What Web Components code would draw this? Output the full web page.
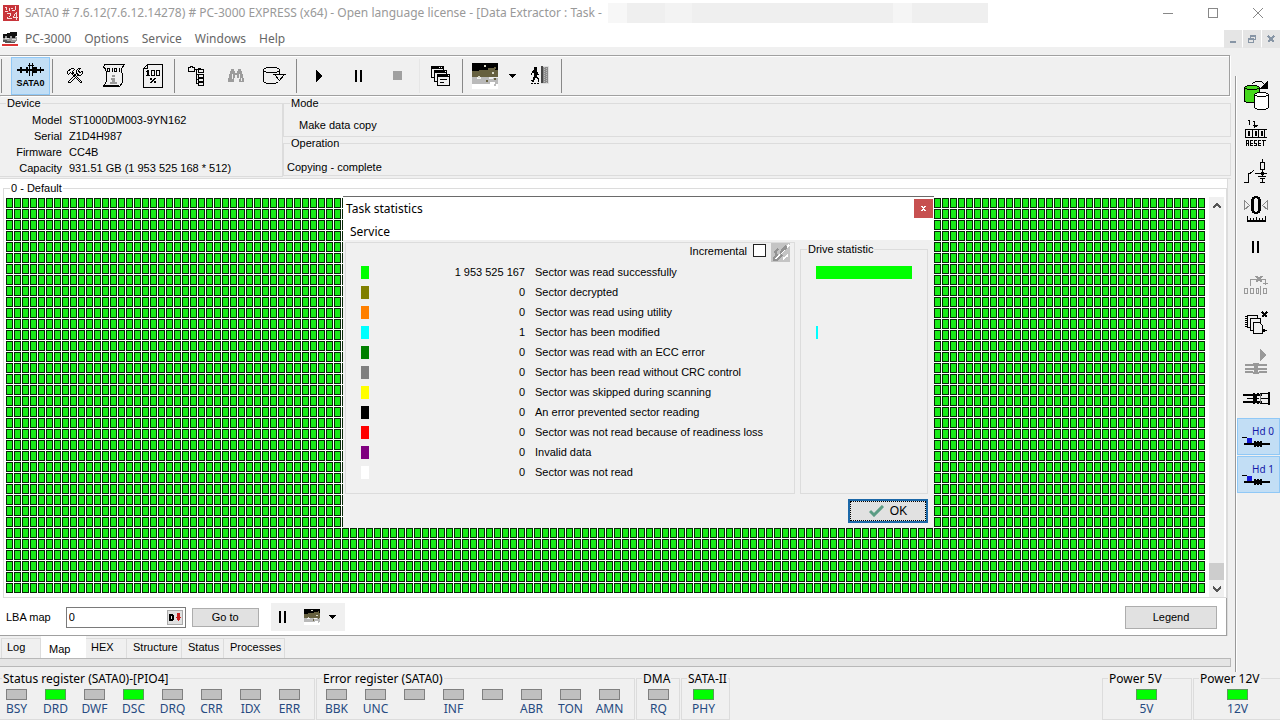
<!DOCTYPE html>
<html lang="en">
<head>
<meta charset="utf-8">
<title>PC-3000 EXPRESS - Data Extractor</title>
<style>
html, body { margin: 0; height: 100%; }
body { background: #f0f0f0; color: #000; font: 11px/14px "Liberation Sans", Arial, sans-serif; overflow: hidden; }
</style>
</head>
<body>
<app-window></app-window>
<script>
const UI = '12px/16px "Noto Sans", "Open Sans", sans-serif';

const define = (name, html, setup) => {
  const tpl = document.createElement('template');
  tpl.innerHTML = '<style>*{box-sizing:border-box}button{font:inherit;color:inherit;margin:0;padding:0}svg{display:block;flex:none}</style>' + html;
  customElements.define(name, class extends HTMLElement {
    constructor() {
      super();
      this.attachShadow({ mode: 'open' }).append(tpl.content.cloneNode(true));
    }
    connectedCallback() { if (setup) setup(this, this.shadowRoot); }
  });
};

/* Each icon: [width, height, markup]; strokes are one pixel wide on half-pixel centres. */
const K = 'fill="none" stroke="#000"';
const noise = `<path fill="#000" d="M0 0h26v8H0z"/><path fill="#66603f" d="M0 8h7V7h9V5h7v2h3v7H0z"/><path fill="#b9b9b9" d="M0 14h5v2h4v-2h8v2h4v-1h5v6H0z"/><path fill="#fff" d="M0 21h18v-2h5v2h3v5H0z"/><path fill="#d8d8c8" d="M12 2h2v2h-2zM20 9h2v2h-2zM6 13h2v2H6z"/><path fill="#66603f" d="M22 15h2v2h-2zM14 17h2v2h-2zM22 4h2v2h-2z"/><path fill="#bbb" d="M22 21h2v2h-2z"/>`;
const hd = `<path fill="#1418d8" d="M5 2h5v5H5z"/><path stroke="#000" stroke-width="1" d="M0 1.500h5"/><path fill="#000" d="M2 7h10V5h2v1h1V5h2v1h1V5h2v2h9v2h-9v2h-2v-1h-1v1h-2v-1h-1v1h-2V9H2z"/>`;
const ICONS = {
  logo: [16, 16, `<path fill="#c8343a" d="M0 0h16v16H0z"/><path fill="none" stroke="#f6dede" d="M2 2.500h2M3.500 2v3M6.500 3v3M8 3.500h2M12.500 1v4M9 5.500h3M2 6.500h3M4 8.500h4M7.500 8v3M6 11.500h1M4 13.500h5M4.500 12v2M13.500 7v8M9.500 12.500h5M12.500 8v1M11.500 9v2M10.500 11v1"/>`],
  drive: [16, 16, `<path fill="#999" d="M1 3h6l7-1 1 8-3 2H3L1 9z"/><path fill="#111" d="M1 3h4V2h3V1h7v4h-2v2h-3V5H8v2H5V5H3v2H1z"/><path fill="#555" d="M1 9h4v1h4v1h4v1H3v-1H1z"/><path fill="#ddd" d="M3 7h4v1H3zM10 8h4v1h-4z"/><path fill="#d33" d="M0 13h16v2H0z"/>`],
  sata: [27, 14, `<path fill="#000" d="M0 6h3V4h2v2h4V4h2v2h5V4h4v2h3V4h1v2h3v2h-3v2h-1V8h-3v2h-4V8h-5v2H9V8H5v2H3V8H0z"/><path ${K} d="M12.500 0v13M15.500 0v13M11 2.500h6"/>`],
  tools: [16, 16, `<path ${K} d="M0.500 5.500v-2l4-3h2l1 1-2 2 1 2h-2l-1-1-2 2zM6.500 5.500l8 8v1h-1l-8-8M1.500 14.500v-1l8-8 2 1-8 8zM9.500 5.500v-3l2-2h2l-2 2 1 2 3-1v2l-2 2h-3"/>`],
  script: [22, 23, `<path ${K} d="M1 0.500h20.500l-3 4 1 8v6l-3 4H0.500l3-5V9l-1-4-2-2 1-2.500M0 21.500h16"/><path ${K} d="M4.500 4.500h2v3h-2zM9.500 4v4M11.500 4.500h2v3h-2zM16.500 4v4"/><path fill="#999" d="M9 11h3v2H9zM8 14h4v4h2v2H7v-2h2v-2H8z"/>`],
  pct: [20, 24, `<path ${K} d="M4.500 0.500h15v23H0.500v-19zM4.500 0.500v4H0.500"/><path fill="#000" fill-rule="evenodd" d="M4 6h2v5h1v1H3v-1h1V8H3V7h1zM8 6h4v6H8zm1 1v4h2V7zM13 6h4v6h-4zm1 1v4h2V7zM7 14h2v2H7zM11 14h2v1h-1v1h-1v1h-1v1H9v1H7v-1h1v-1h1v-1h1v-1h1zM11 17h2v2h-2z"/>`],
  tree: [17, 20, `<path ${K} d="M0.500 1.500h2v-1h2v1h2v4H0.500zM7 3.500h3M8.500 4v13M8 8.500h2M8 13.500h2M8 17.500h2M10.500 3.500h5v3h-5zM10.500 8.500h5v3h-5zM10.500 12.500h5v3h-5zM10.500 16.500h5v3h-5zM10 2.500h3"/>`],
  binoc: [16, 14, `<path fill="#9c9c9c" d="M3 0h3v2h1v2h2V2h1V0h3v2h1v3h1v4h1v4h-5V9H9V6H7v3H6v4H0V9h1V5h1V2h1z"/><path fill="#eee" d="M4 5h1v5H4zM7 7h1v5H7zM11 5h1v5h-1zM13 9h1v3h-1z"/>`],
  disk: [23, 18, `<path ${K} d="M3 0.500h11M1 1.500h2M14 1.500h2M0.500 2v13M16.500 2v5M1 4.500h2M14 4.500h2M3 5.500h11M1 15.500h2M3 16.500h10M13 15.500h2M11.500 7.500h10l-5 6z"/><path ${K} d="M10 7.500h13"/>`],
  play: [7, 12, `<path fill="#000" d="M0 0h1v1h1v1h1v1h1v1h1v1h1v2H5v1H4v1H3v1H2v1H1v1H0z"/>`],
  pause: [8, 12, `<path fill="#000" d="M0 0h2v12H0zM5 0h2v12H5z"/>`],
  stop: [9, 9, `<path fill="#a0a0a0" d="M0 0h9v9H0z"/>`],
  windows: [19, 20, `<path fill="#000" d="M0 0h13v4h3v4h3v12H6v-4H3v-4H0z"/><path fill="#f0f0f0" d="M1 3h11v1H3v7H1zM4 7h11v1H6v7H4zM7 11h11v8H7z"/><path fill="#000" d="M9 13h7v1H9zM9 16h4v1H9z"/><path fill="#f0f0f0" d="M8 1h1v1H8zM10 1h1v1h-1zM14 5h1v1h-1zM17 9h1v1h-1z"/>`],
  noise: [26, 26, noise],
  noiseSmall: [16, 16, `<svg width="16" height="16" viewBox="0 0 26 26">${noise}</svg>`],
  down: [7, 4, `<path fill="#000" d="M0 0h7v1H6v1H5v1H4v1H3V3H2V2H1V1H0z"/>`],
  exit: [19, 19, `<path fill="#000" d="M4 1h3v3H4zM3 4h4v2h1v2h1v1H7v2h1v1h1v4H8v-3H7v-1H5v2H4v2H2v-1H1v-1h2v-3h1V7H2v2H1V7h1V5h1z"/><path stroke="#000" stroke-dasharray="2 1" d="M1 17.500h9"/><path fill="#ddd" d="M11 0h8v18h-8z"/><path fill="#444" d="M11 0h2v17h-2z"/><path fill="#8a8a8a" d="M13 1h5v16h-5z"/><path fill="none" stroke="#bbb" stroke-dasharray="1 1" d="M14.500 1v16M16.500 2v15"/>`],
  copyDisk: [26, 31, `<path fill="#45d81c" stroke="#000" d="M1.500 7.500l3-2h9l3 2v14l-3 1h-9l-3-1z"/><path ${K} d="M1.500 7.500l3 2h9l3-2"/><path fill="#fff" stroke="#000" d="M11.500 14.500l3-2h8l3 2v13l-3 2h-8l-3-2z"/><path ${K} d="M11.500 14.500l3 2h8l3-2M9.500 3.500l3-2h6l3 3"/><path fill="#000" d="M25 0v9h-8z"/>`],
  reset: [22, 28, `<path ${K} d="M3 1.500h1.500V6M9.500 2.500v6M8 2.500h2M7.500 6.500h5M8.500 7.500h3M0.500 10.500h21M0.500 18.500h21M0.500 10v9M7.500 11v8M13.500 11v8M19.500 11v8M3.500 12.500h1v4h-1zM10.500 12.500h1v4h-1zM16.500 12.500h1v4h-1z"/><path ${K} d="M1.500 27v-5.500h2v3h-2M3.500 25v2M8 21.500h-2.500v5h2.500M5 24.500h3M12 21.500h-2.500v3h2v2h-2.500M16 21.500h-2.500v5h2.500M13 24.500h3M17 21.500h4M18.500 21v6"/>`],
  circuit: [25, 25, `<path ${K} d="M0 23.500h4.500v-9H6l4-3M11 14.500h12M18.500 0v4M16.500 3.500h4v7h-4zM18.500 10v7M14 17.500h8M16 19.500h5M18.500 20v4M16 23.500h5"/><path fill="#000" d="M17 13h3v3h-3z"/>`],
  zero: [24, 27, `<path fill="none" stroke="#888" d="M0.500 4.500v9l5-4zM23.500 4.500v9l-5-4z"/><path fill="#000" fill-rule="evenodd" d="M10 0h4v1h2v2h1v12h-1v2h-2v1h-4v-1H8v-2H7V3h1V1h2zm0 3v12h1v1h2v-1h1V3h-1V2h-2v1z"/><path fill="#000" d="M3 20h1v4h2v-2h1v2h2v-2h1v2h2v-3h1v3h2v-2h1v2h2v-2h1v2h2v-4h1v6H3z"/>`],
  cutoff: [24, 19, `<path fill="none" stroke="#999" d="M6.500 10V3.500h15V9M19 7.500h5M0.500 12.500h3v5h-3zM6.500 12.500h3v5h-3zM12.500 12.500h2v5h-2zM16.500 10v9M19.500 12.500h3v5h-3z"/><path stroke="#999" stroke-width="2" d="M12 0l6 6M18 0l-6 6"/>`],
  pages: [23, 24, `<g fill="#f0f0f0" stroke="#000"><path d="M2.500 4.500h10v12h-10z"/><path d="M5.500 7.500h10v12h-10z"/><path d="M8.500 11.500h6l3 3v8h-9z"/></g><path ${K} d="M0 5.500h3M0 7.500h3M0 9.500h3M0 11.500h3M0 13.500h3M0 15.500h3"/><path ${K} stroke-width="2" d="M17 1l5 5M22 1l-5 5"/><path fill="#000" d="M17 18h3v1h2v1h-2v1h-3z"/>`],
  connectOff: [22, 25, `<path fill="#999" d="M15 0l6 6-6 6zM0 15h8v-1h6v1h8v2H0zM0 19h22v2H0zM0 22h8v1h6v-1h8v2h-8v1H8v-1H0zM9 16h4v8H9z"/>`],
  connect: [27, 14, `<path fill="#000" d="M0 2h10V1h2v1h2V1h2v1h3v2H0zM0 9h19v2h-3v1h-2v-1h-2v1h-2v-1H0zM10 3h4v7h-4zM4 6h12v1H4zM25 0h2v13h-2z"/><path ${K} d="M17 1.500h9M17 6.500h9M17 11.500h9"/><path fill="#777" d="M17 2h1v9h-1z"/>`],
  hd: [28, 12, hd],
  check: [15, 12, `<path fill="none" stroke="#5b9c84" stroke-width="3" shape-rendering="auto" d="M1 6l4 4 9-9"/>`],
  brush: [19, 19, `<path fill="#c4c4c4" d="M0 0h19v19H0z"/><path stroke="#fff" stroke-width="2" d="M18 2L9 11M4 17l5-5M12 16l5-4"/><path fill="none" stroke="#929292" stroke-width="2" d="M15 3l-5 5M7 6L4 9l2 3-3 3v2h3l5-5M9 10l7-6"/>`],
  up: [8, 6, `<path fill="none" stroke="#555" stroke-width="2" d="M0 5l4-4 4 4"/>`],
  dn: [8, 6, `<path fill="none" stroke="#555" stroke-width="2" d="M0 1l4 4 4-4"/>`],
  min: [10, 10, `<path stroke="#888" d="M0 5.500h10"/>`],
  max: [10, 10, `<path fill="none" stroke="#888" d="M0.500 0.500h9v9h-9z"/>`],
  close: [10, 10, `<path fill="none" stroke="#888" shape-rendering="auto" d="M0 0l10 10M10 0L0 10"/>`],
  cmin: [8, 8, `<path fill="#8795a5" d="M1 6h6v2H1z"/>`],
  crest: [8, 8, `<path fill="none" stroke="#8795a5" d="M2.500 3V0.500h5v4H6M0.500 3.500h5v4h-5zM2 1.500h6M0 4.500h6"/>`],
  cclose: [8, 8, `<path fill="none" stroke="#8795a5" stroke-width="2" d="M1 1l6 6M7 1L1 7"/>`],
  xw: [5, 5, `<path fill="#fff" d="M0 0h2v1h1V0h2v1H4v1H3v1h1v1h1v1H3V4H2v1H0V4h1V3h1V2H1V1H0z"/>`],
  dmark: [12, 9, `<path fill="#000" fill-rule="evenodd" d="M0 1h4v1h1v5H4v1H0zM2 3v3h1V3z"/><path fill="#c22" d="M8 0h3v4h1v1h-1v2H10v1H9V7H8V5H7V4h1z"/>`]
};
define('px-icon', '', (el, root) => {
  const [w, h, body] = ICONS[el.getAttribute('name')];
  root.innerHTML = `<style>:host{display:inline-block;flex:none}svg{display:block}</style><svg width="${w}" height="${h}" viewBox="0 0 ${w} ${h}" shape-rendering="crispEdges" aria-hidden="true">${body}</svg>`;
});

define('group-box', `<style>
:host{display:flex;min-width:0}
fieldset{flex:1;min-width:0;margin:0;padding:0;border:1px solid #dcdcdc}
legend{padding:0 1px;margin-left:var(--legend-x,6px);line-height:13px;white-space:nowrap}
</style><fieldset><legend></legend><slot></slot></fieldset>`, (el, root) => {
  root.querySelector('legend').textContent = el.getAttribute('label');
});

define('title-bar', `<style>
:host{display:flex;align-items:center;height:26px;background:#fff;color:#999;font:${UI}}
px-icon.logo{margin:0 6px 0 3px}
.hidden{width:380px;height:20px;margin-left:6px;background:linear-gradient(90deg,#f7f7f7 5%,#efefef 5% 15%,#f3f3f3 15% 22%,#efefef 22% 75%,#f5f5f5 75% 80%,#efefef 80%)}
.box{display:flex;margin-left:auto}
.box button{width:45px;height:26px;border:0;background:none;display:flex;align-items:center;justify-content:center}
span{white-space:nowrap}
</style><px-icon class="logo" name="logo"></px-icon>
<span>SATA0 # 7.6.12(7.6.12.14278) # PC-3000 EXPRESS (x64) - Open language license - [Data Extractor : Task -</span>
<div class="hidden"></div>
<div class="box"><button aria-label="Minimize"><px-icon name="min"></px-icon></button><button aria-label="Maximize"><px-icon name="max"></px-icon></button><button aria-label="Close"><px-icon name="close"></px-icon></button></div>`);

define('menu-bar', `<style>
:host{display:flex;height:21px;background:#fff;color:#666;font:${UI}}
nav{display:flex;align-items:center;gap:13px;padding-left:2px;height:25px}
nav px-icon{margin-right:-6px}
button.m{border:0;background:none}
.mdi{display:flex;gap:1px;margin:4px 0 0 auto}
.mdi button{width:18px;height:18px;border:0;background:#e5e5e5;display:flex;align-items:center;justify-content:center}
</style><nav><px-icon name="drive"></px-icon><button class="m">PC-3000</button><button class="m">Options</button><button class="m">Service</button><button class="m">Windows</button><button class="m">Help</button></nav>
<div class="mdi"><button aria-label="Minimize child"><px-icon name="cmin"></px-icon></button><button aria-label="Restore child"><px-icon name="crest"></px-icon></button><button aria-label="Close child"><px-icon name="cclose"></px-icon></button></div>`);

customElements.define('tool-icon', class extends HTMLElement {
  constructor() { super(); this.attachShadow({ mode: 'open' }); }
  connectedCallback() {
    const n = this.getAttribute('name'), label = this.getAttribute('label') || n;
    this.shadowRoot.innerHTML = `<style>
:host{display:flex;width:39px;height:38px;flex:none}
:host([arrow]){width:16px}
:host([side]){width:auto}
button{flex:1;box-sizing:border-box;display:flex;flex-direction:column;align-items:center;justify-content:center;gap:2px;padding:0;border:0;background:none;color:inherit;font:bold 9px/9px "Liberation Sans",sans-serif}
:host([side]) button{padding-right:5px}
:host([active]) button{background:#c2def5;border:1px solid #90c8f6}
:host([side][active]) button{margin-bottom:1px;color:#1418a8;font:10px/10px "Noto Sans",sans-serif;flex-direction:column-reverse;gap:0}
:host([side]) ::slotted(*){margin-left:14px}
</style><button aria-label="${label}"><px-icon name="${n}"></px-icon><slot></slot></button>`;
  }
});

define('tool-bar', `<style>
:host{display:flex;align-items:center;height:41px;margin:0 5px 1px 0;border:solid #a0a0a0;border-width:1px 1px 1px 0;box-shadow:inset 0 1px #fff,1px 1px #fff}
i{width:1px;height:34px;margin:0 2px;background:#888}
i:first-of-type{margin:0 9px 0 1px}
i.wide{margin-right:3px}
i.soft{margin:0 1px 0 2px;background:#e6e6e6}
</style><i></i><tool-icon name="sata" label="SATA0" active><span>SATA0</span></tool-icon><i></i>
<tool-icon name="tools" label="Settings"></tool-icon><tool-icon name="script" label="Script"></tool-icon><tool-icon name="pct" label="Progress"></tool-icon><i></i>
<tool-icon name="tree" label="Tree"></tool-icon><tool-icon name="binoc" label="Find"></tool-icon><tool-icon name="disk" label="Disk"></tool-icon><i class="wide"></i>
<tool-icon name="play" label="Start"></tool-icon><tool-icon name="pause" label="Pause"></tool-icon><tool-icon name="stop" label="Stop"></tool-icon><i class="soft"></i>
<tool-icon name="windows" label="Windows"></tool-icon><i></i><tool-icon name="noise" label="Map view"></tool-icon><tool-icon arrow name="down" label="Map view options"></tool-icon><tool-icon name="exit" label="Exit"></tool-icon><i></i>`);

define('info-panel', `<style>
:host{display:grid;grid-template-columns:283px minmax(0,1fr);height:82px;padding-bottom:2px;margin-right:4px;border-bottom:1px solid #dcdcdc}
dl{display:grid;grid-template-columns:62px auto;column-gap:7px;line-height:16px;margin:2px 0 0}
dt{text-align:right}dd{margin:0;white-space:nowrap}
.device{margin-left:-1px}
.right{display:grid;grid-template-rows:40px 39px}
p{margin:8px 0 0 15px;line-height:14px}
.op p{margin:10px 0 0 3px}
</style><group-box class="device" label="Device"><dl><dt>Model</dt><dd>ST1000DM003-9YN162</dd><dt>Serial</dt><dd>Z1D4H987</dd><dt>Firmware</dt><dd>CC4B</dd><dt>Capacity</dt><dd>931.51 GB (1 953 525 168 * 512)</dd></dl></group-box>
<div class="right"><group-box label="Mode"><p>Make data copy</p></group-box><group-box class="op" label="Operation"><p>Copying - complete</p></group-box></div>`);

define('scroll-bar', `<style>
:host{display:flex;flex-direction:column;width:15px;background:#f0f0f0}
button{height:17px;border:0;background:none;display:flex;align-items:center;justify-content:center}
.track{flex:1;display:flex;flex-direction:column;justify-content:flex-end}
.thumb{height:17px;background:#cdcdcd}
</style><button aria-label="Scroll up"><px-icon name="up"></px-icon></button><div class="track"><div class="thumb"></div></div><button aria-label="Scroll down"><px-icon name="dn"></px-icon></button>`);

define('sector-map', `<style>
:host{display:block;min-width:0}
svg{width:100%;height:100%}
</style><svg shape-rendering="crispEdges" role="img" aria-label="Sector map"><defs><pattern id="cell" width="8" height="11" patternUnits="userSpaceOnUse"><rect width="8" height="11" fill="#fff"/><rect width="7" height="10" fill="#062806"/><rect x="1" y="1" width="5" height="8" fill="#18ec18"/></pattern></defs><rect width="100%" height="100%" fill="url(#cell)"/></svg>`);

define('map-page', `<style>
:host{display:flex;flex-direction:column;background:#fff;margin-right:8px;padding-top:3px;border-bottom:1px solid #a0a0a0;min-height:0;box-shadow:1px 0 #dcdcdc}
group-box{flex:1;margin:0 0 0 3px;min-height:0}
.area{display:flex;gap:3px;height:100%;padding:2px 2px 0}
sector-map{flex:1;margin:1px 0 3px}
.controls{display:flex;align-items:center;height:37px;padding:1px 9px 0 6px;border-right:1px solid #a0a0a0}
.field{display:flex;align-items:center;width:120px;height:21px;margin:0 6px 0 15px;padding-right:2px;border:1px solid #7a7a7a}
input{flex:1;min-width:0;border:0;padding:0 2px;font:inherit;outline:0;background:none}
.field button{width:16px;height:15px;border:1px solid #aaa;background:#e1e1e1;display:flex;align-items:center;justify-content:center}
.b{border:1px solid #adadad;background:#e1e1e1}
.go{width:67px;height:19px}
.tools{display:flex;align-items:center;gap:9px;margin-left:12px;padding:0 8px;width:74px;height:28px;background:#f0f0f0}
.tools button{border:0;background:none;display:flex}
.tools .view{margin-left:8px}
.legend{margin-left:auto;width:92px;height:23px}
</style><group-box label="0 - Default"><div class="area"><sector-map></sector-map><scroll-bar></scroll-bar></div></group-box>
<div class="controls"><label for="lba">LBA map</label><div class="field"><input id="lba" value="0"><button aria-label="Decimal"><px-icon name="dmark"></px-icon></button></div><button class="b go">Go to</button>
<div class="tools"><button aria-label="Pause"><px-icon name="pause"></px-icon></button><button class="view" aria-label="View"><px-icon name="noiseSmall"></px-icon></button><button aria-label="View options"><px-icon name="down"></px-icon></button></div><button class="b legend">Legend</button></div>`);

define('tab-strip', `<style>
:host{display:flex;height:22px;padding-left:1px}
button{height:20px;margin-top:2px;padding:0 0 3px 6px;text-align:left;border:solid #dcdcdc;border-width:1px 1px 0 0;background:none;line-height:14px}
.l{width:40px;border-left-width:1px;padding-left:5px}
.on{width:45px;height:22px;margin-top:0;padding:4px 0 0 8px;background:#fff;border:0}
.h{width:41px;padding-left:5px}.s{width:55px}.t{width:42px}.p{width:61px}
</style><button class="l">Log</button><button class="on" aria-pressed="true">Map</button><button class="h">HEX</button><button class="s">Structure</button><button class="t">Status</button><button class="p">Processes</button>`);

define('side-bar', `<style>
:host{display:block;margin-top:29px;border-left:1px solid #999;box-shadow:inset 1px 0 #fff;padding-left:1px}
</style><tool-icon side name="copyDisk" label="Copy disk"></tool-icon><tool-icon side name="reset" label="Reset"></tool-icon><tool-icon side name="circuit" label="Power"></tool-icon><tool-icon side name="zero" label="Calibrate"></tool-icon><tool-icon side name="pause" label="Pause"></tool-icon><tool-icon side name="cutoff" label="Cut off"></tool-icon><tool-icon side name="pages" label="Pages"></tool-icon><tool-icon side name="connectOff" label="Disconnect"></tool-icon><tool-icon side name="connect" label="Connect"></tool-icon><tool-icon side active name="hd" label="Hd 0"><span>Hd 0</span></tool-icon><tool-icon side active name="hd" label="Hd 1"><span>Hd 1</span></tool-icon>`);

define('status-led', `<style>
:host{display:flex;flex-direction:column;align-items:center;width:39px;color:#264a80;line-height:16px}
i{width:21px;height:11px;border:1px solid #808080;background:#c0c0c0;margin-bottom:1px}
:host([on]) i{background:#0f0;border-color:#5a9a5a}
</style><i></i><slot></slot>`);

define('status-bar', `<style>
:host{display:flex;gap:1px;height:48px;font:${UI}}
group-box{--legend-x:5px}
.row{display:flex;padding-top:4px}
.a{width:316px;margin-left:-1px;--legend-x:2px}.a .row{margin-left:-3px}
.b{width:319px}.d{width:44px}.s{width:49px}.p5{width:90px;margin-left:auto}.p12{width:88px;margin-right:-1px}
.d .row,.s .row{padding-left:2px}.p5 .row,.p12 .row{padding-left:24px}
</style>
<group-box class="a" label="Status register (SATA0)-[PIO4]"><div class="row"><status-led>BSY</status-led><status-led on>DRD</status-led><status-led>DWF</status-led><status-led on>DSC</status-led><status-led>DRQ</status-led><status-led>CRR</status-led><status-led>IDX</status-led><status-led>ERR</status-led></div></group-box>
<group-box class="b" label="Error register (SATA0)"><div class="row"><status-led>BBK</status-led><status-led>UNC</status-led><status-led></status-led><status-led>INF</status-led><status-led></status-led><status-led>ABR</status-led><status-led>TON</status-led><status-led>AMN</status-led></div></group-box>
<group-box class="d" label="DMA"><div class="row"><status-led>RQ</status-led></div></group-box>
<group-box class="s" label="SATA-II"><div class="row"><status-led on>PHY</status-led></div></group-box>
<group-box class="p5" label="Power 5V"><div class="row"><status-led on>5V</status-led></div></group-box>
<group-box class="p12" label="Power 12V"><div class="row"><status-led on>12V</status-led></div></group-box>`);

const STATS = [
  ['#00ff00', '1 953 525 167', 'Sector was read successfully', 96],
  ['#808000', '0', 'Sector decrypted', 0],
  ['#ff8000', '0', 'Sector was read using utility', 0],
  ['#00ffff', '1', 'Sector has been modified', 2],
  ['#008000', '0', 'Sector was read with an ECC error', 0],
  ['#808080', '0', 'Sector has been read without CRC control', 0],
  ['#ffff00', '0', 'Sector was skipped during scanning', 0],
  ['#000000', '0', 'An error prevented sector reading', 0],
  ['#ff0000', '0', 'Sector was not read because of readiness loss', 0],
  ['#800080', '0', 'Invalid data', 0],
  ['#ffffff', '0', 'Sector was not read', 0]
];
define('stats-dialog', `<style>
:host{display:block;position:absolute;left:calc(50% - 297px);top:calc(50% - 164px);width:591px;background:#f0f0f0;border-top:1px solid #6a6a6a}
header{display:flex;align-items:center;justify-content:space-between;height:23px;padding:0 1px 0 3px;background:#fff;font:${UI}}
header button{width:19px;height:19px;border:0;background:#c75050;display:flex;align-items:center;justify-content:center;align-self:flex-start;margin-top:2px}
nav{height:20px;padding:4px 7px 0;background:#fff;font:${UI}}
nav button{border:0;background:none;display:block}
.cols{display:grid;grid-template-columns:minmax(0,1fr) 128px;column-gap:5px;padding:2px 6px 0 2px}
.left{border:1px solid #dcdcdc;height:252px}
.inc{display:flex;align-items:flex-start;justify-content:flex-end;height:19px;padding-right:4px}
.inc label{padding-top:1px}
input{appearance:none;width:13px;height:13px;margin:1px 5px 0 6px;border:1px solid #222;background:#fff}
.inc button{border:0;background:none}
table{border-collapse:collapse;margin:0 0 0 15px}
td{height:20px;padding:0;line-height:14px;white-space:nowrap}
td:nth-child(2){width:156px;text-align:right}
td:nth-child(3){padding-left:10px}
i{display:block;width:8px;height:13px}
group-box{margin-top:1px}
.bars{padding:6px 0 0 15px}
.bars div{height:20px;display:flex;align-items:center}
footer{display:flex;justify-content:flex-end;padding:5px 6px 5px}
footer button{display:flex;align-items:center;justify-content:center;gap:6px;width:80px;height:24px;border:2px solid #1c68a8;background:#e1e1e1;outline:1px dotted #000;outline-offset:-3px;font-size:12px}
</style><header><span>Task statistics</span><button aria-label="Close"><px-icon name="xw"></px-icon></button></header><nav><button>Service</button></nav>
<div class="cols"><div class="left"><div class="inc"><label for="inc">Incremental</label><input type="checkbox" id="inc"><button aria-label="Clear"><px-icon name="brush"></px-icon></button></div><table><tbody></tbody></table></div>
<group-box label="Drive statistic"><div class="bars"></div></group-box></div>
<footer><button><px-icon name="check"></px-icon>OK</button></footer>`, (el, root) => {
  root.querySelector('tbody').innerHTML = STATS.map(([c, n, t]) => `<tr><td><i style="background:${c}"></i></td><td>${n}</td><td>${t}</td></tr>`).join('');
  root.querySelector('.bars').innerHTML = STATS.map(([c, , , w]) => `<div><i style="background:${c};width:${w}px"></i></div>`).join('');
  el.setAttribute('role', 'dialog');
});

define('app-window', `<style>
:host{display:flex;flex-direction:column;height:100vh;position:relative;overflow:hidden}
.work{flex:1;min-height:0;display:grid;grid-template-columns:minmax(0,1fr) 45px}
main{display:flex;flex-direction:column;padding-top:8px;min-height:0}
map-page{flex:1}
.split{height:9px;margin:0 4px 5px 0;border:solid #b8b8b8;border-width:1px 1px 1px 0;background:#e5e5e5}
</style><title-bar></title-bar><menu-bar></menu-bar>
<div class="work"><main><tool-bar></tool-bar><info-panel></info-panel><map-page></map-page><tab-strip></tab-strip><div class="split"></div></main><side-bar></side-bar></div>
<status-bar></status-bar><stats-dialog></stats-dialog>`);
</script>
</body>
</html>
